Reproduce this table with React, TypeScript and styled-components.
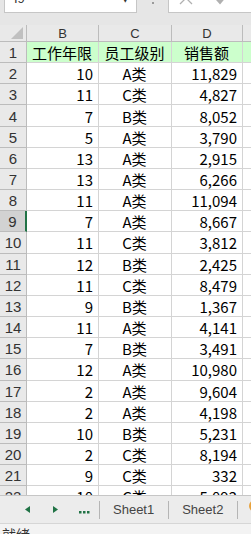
import React from "react";
import styled, { createGlobalStyle } from "styled-components";

const Global = createGlobalStyle`
  html, body { margin: 0; padding: 0; background: #e6e6e6; }
  * { box-sizing: border-box; }
`;

const Page = styled.div`
  width: 251px;
  height: 534px;
  overflow: hidden;
  display: flex;
  flex-direction: column;
  background: #e6e6e6;
  font-family: "Liberation Sans", "Noto Sans CJK SC", sans-serif;
`;

const FormulaBar = styled.div`
  height: 25px;
  flex: none;
  display: flex;
  align-items: flex-start;
`;

const NameBox = styled.div`
  margin-left: 4px;
  width: 133px;
  height: 13px;
  background: #fff;
  border: 1px solid #c6c6c6;
  border-top: none;
  overflow: hidden;
  display: flex;
  justify-content: space-between;
  padding: 0 7px 0 9px;
`;

const CutText = styled.span`
  margin-top: -9px;
  font-size: 13px;
  line-height: 16px;
  color: #333;
`;

const Dots = styled.div`
  width: 31px;
  height: 13px;
  overflow: hidden;
  display: flex;
  justify-content: center;
`;

const DotColumn = styled.span`
  margin-top: -6px;
  display: flex;
  flex-direction: column;
  gap: 2px;
  & > i {
    display: block;
    width: 2px;
    height: 2px;
    background: #9a9a9a;
  }
`;

const FormulaInput = styled.div`
  flex: 1;
  height: 13px;
  background: #fff;
  border: 1px solid #c6c6c6;
  border-top: none;
  border-right: none;
  overflow: hidden;
  display: flex;
  gap: 22px;
  padding-left: 10px;
  align-items: flex-start;
`;

const CutIcon = styled.svg`
  margin-top: -9px;
  flex: none;
`;

const Sheet = styled.div`
  flex: 1;
  min-height: 0;
  overflow: hidden;
  display: grid;
  grid-template-columns: 27px 72px 73px 71px 1fr;
  grid-template-rows: 17px;
  grid-auto-rows: 21.17px;
  align-content: start;
  background: #fff;
`;

const Corner = styled.div`
  background: #e9e9e9;
  border-right: 1px solid #bcbcbc;
  border-bottom: 1px solid #bcbcbc;
  display: flex;
  align-items: flex-end;
  justify-content: flex-end;
  padding: 0 3px 2px 0;
`;

const ColHead = styled.div`
  background: #e9e9e9;
  border-right: 1px solid #bcbcbc;
  border-bottom: 1px solid #bcbcbc;
  display: flex;
  align-items: center;
  justify-content: center;
  font-size: 13px;
  color: #333;
`;

const RowHead = styled.div<{ $active?: boolean }>`
  background: ${(p) => (p.$active ? "#d2d2d2" : "#e9e9e9")};
  border-right: ${(p) => (p.$active ? "2px solid #217346" : "1px solid #bcbcbc")};
  border-bottom: 1px solid #bcbcbc;
  display: flex;
  align-items: center;
  justify-content: center;
  font-size: 15px;
  color: #333;
  padding-top: 1px;
`;

const Cell = styled.div<{ $align?: "left" | "center" | "right"; $head?: boolean }>`
  background: ${(p) => (p.$head ? "#ccffcc" : "#fff")};
  border-right: 1px solid #d4d4d4;
  border-bottom: 1px solid #d4d4d4;
  display: flex;
  align-items: center;
  justify-content: ${(p) =>
    p.$align === "right" ? "flex-end" : p.$align === "center" ? "center" : "flex-start"};
  padding: 1px 5px 0 4px;
  font-family: "Noto Sans CJK SC", sans-serif;
  font-size: 15px;
  color: #000;
  white-space: nowrap;
  overflow: hidden;
`;

const Tabs = styled.div`
  height: 28px;
  flex: none;
  background: #ececec;
  border-top: 1px solid #c6c6c6;
  display: flex;
  align-items: center;
  padding-left: 25px;
  overflow: hidden;
`;

const NavButton = styled.div<{ $w: number }>`
  width: ${(p) => p.$w}px;
  flex: none;
  display: flex;
  align-items: center;
`;

const Sep = styled.div`
  width: 1px;
  height: 18px;
  background: #b5b5b5;
  flex: none;
`;

const Tab = styled.div`
  flex: none;
  padding: 0 14px 0 13px;
  font-size: 13px;
  color: #444;
  line-height: 16px;
`;

const AddIcon = styled.div`
  margin-left: 11px;
  width: 12px;
  height: 12px;
  border-radius: 50%;
  border: 2px solid #e8a23c;
  flex: none;
  margin-top: -8px;
`;

const Status = styled.div`
  flex: none;
  height: 11px;
  background: #f3f3f3;
  border-top: 1px solid #d6d6d6;
  padding: 3px 0 0 2px;
  font-family: "Noto Sans CJK SC", sans-serif;
  font-size: 14px;
  line-height: 14px;
  color: #333;
  overflow: hidden;
`;

const rows: [string, string, string][] = [
  ["10", "A类", "11,829"],
  ["11", "C类", "4,827"],
  ["7", "B类", "8,052"],
  ["5", "A类", "3,790"],
  ["13", "A类", "2,915"],
  ["13", "A类", "6,266"],
  ["11", "A类", "11,094"],
  ["7", "A类", "8,667"],
  ["11", "C类", "3,812"],
  ["12", "B类", "2,425"],
  ["11", "C类", "8,479"],
  ["9", "B类", "1,367"],
  ["11", "A类", "4,141"],
  ["7", "B类", "3,491"],
  ["12", "A类", "10,980"],
  ["2", "A类", "9,604"],
  ["2", "A类", "4,198"],
  ["10", "B类", "5,231"],
  ["2", "C类", "8,194"],
  ["9", "C类", "332"],
  ["10", "C类", "5,092"],
];

export default function App() {
  return (
    <>
      <Global />
      <Page>
        <FormulaBar>
          <NameBox>
            <CutText>I9</CutText>
            <CutText>▾</CutText>
          </NameBox>
          <Dots>
            <DotColumn>
              <i />
              <i />
              <i />
            </DotColumn>
          </Dots>
          <FormulaInput>
            <CutIcon width="14" height="14" viewBox="0 0 14 14">
              <path d="M1 1 L13 13 M13 1 L1 13" stroke="#b0b0b0" strokeWidth="1.3" fill="none" />
            </CutIcon>
            <CutIcon width="14" height="14" viewBox="0 0 14 14">
              <path d="M1 7 L5 11.5 L13 2" stroke="#b0b0b0" strokeWidth="2.6" fill="none" />
            </CutIcon>
          </FormulaInput>
        </FormulaBar>

        <Sheet>
          <Corner>
            <svg width="12" height="12" viewBox="0 0 12 12">
              <polygon points="12,0 12,12 0,12" fill="#c0c0c0" />
            </svg>
          </Corner>
          <ColHead>B</ColHead>
          <ColHead>C</ColHead>
          <ColHead>D</ColHead>
          <ColHead />

          <RowHead>1</RowHead>
          <Cell $head $align="center">工作年限</Cell>
          <Cell $head $align="center">员工级别</Cell>
          <Cell $head $align="center">销售额</Cell>
          <Cell $head />

          {rows.map((r, i) => {
            const n = i + 2;
            return (
              <React.Fragment key={n}>
                <RowHead $active={n === 9}>{n}</RowHead>
                <Cell $align="right">{r[0]}</Cell>
                <Cell $align="center">{r[1]}</Cell>
                <Cell $align="right">{r[2]}</Cell>
                <Cell />
              </React.Fragment>
            );
          })}
        </Sheet>

        <Tabs>
          <NavButton $w={28}>
            <svg width="5" height="7" viewBox="0 0 5 7">
              <polygon points="5,0 5,7 0,3.5" fill="#217346" />
            </svg>
          </NavButton>
          <NavButton $w={26}>
            <svg width="5" height="7" viewBox="0 0 5 7">
              <polygon points="0,0 5,3.5 0,7" fill="#217346" />
            </svg>
          </NavButton>
          <NavButton $w={20}>
            <svg width="11" height="3" viewBox="0 0 11 3" style={{ marginTop: 5 }}>
              <rect x="0" y="0" width="2.5" height="2.5" fill="#217346" />
              <rect x="4" y="0" width="2.5" height="2.5" fill="#217346" />
              <rect x="8" y="0" width="2.5" height="2.5" fill="#217346" />
            </svg>
          </NavButton>
          <Sep />
          <Tab>Sheet1</Tab>
          <Sep />
          <Tab>Sheet2</Tab>
          <Sep />
          <AddIcon />
        </Tabs>

        <Status>就绪</Status>
      </Page>
    </>
  );
}
